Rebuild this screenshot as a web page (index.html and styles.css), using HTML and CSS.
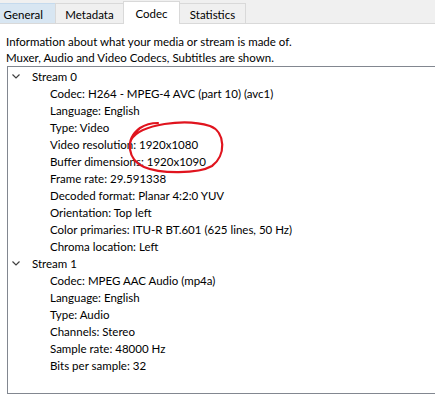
FILE: index.html
```html
<!DOCTYPE html>
<html>
<head>
<meta charset="utf-8">
<link rel="stylesheet" href="styles.css">
</head>
<body>
<div class="window">
  <div class="tabs">
    <div class="tab hover t-general">General</div>
    <div class="tab t-metadata">Metadata</div>
    <div class="tab selected t-codec">Codec</div>
    <div class="tab t-stats">Statistics</div>
  </div>
  <div class="page">
    <p class="info">Information about what your media or stream is made of.<br>Muxer, Audio and Video Codecs, Subtitles are shown.</p>
    <div class="tree">
      <div class="node">
        <div class="row parent"><svg class="chev" width="8" height="5" viewBox="0 0 8 5"><polyline points="0.5,0.5 4,4 7.5,0.5"/></svg><span>Stream 0</span></div>
        <div class="row child">Codec: H264 - MPEG-4 AVC (part 10) (avc1)</div>
        <div class="row child">Language: English</div>
        <div class="row child">Type: Video</div>
        <div class="row child">Video resolution: 1920x1080</div>
        <div class="row child">Buffer dimensions: 1920x1090</div>
        <div class="row child">Frame rate: 29.591338</div>
        <div class="row child">Decoded format: Planar 4:2:0 YUV</div>
        <div class="row child">Orientation: Top left</div>
        <div class="row child">Color primaries: ITU-R BT.601 (625 lines, 50 Hz)</div>
        <div class="row child">Chroma location: Left</div>
      </div>
      <div class="node">
        <div class="row parent"><svg class="chev" width="8" height="5" viewBox="0 0 8 5"><polyline points="0.5,0.5 4,4 7.5,0.5"/></svg><span>Stream 1</span></div>
        <div class="row child">Codec: MPEG AAC Audio (mp4a)</div>
        <div class="row child">Language: English</div>
        <div class="row child">Type: Audio</div>
        <div class="row child">Channels: Stereo</div>
        <div class="row child">Sample rate: 48000 Hz</div>
        <div class="row child">Bits per sample: 32</div>
      </div>
    </div>
  </div>
  <svg class="mark" width="435" height="401" viewBox="0 0 435 401">
    <path d="M131 140 C140 124, 185 118, 210 126 C226 132, 226 156, 212 166 C198 174, 160 174, 144 167 C128 160, 124 140, 140 128 C146 124, 152 123, 158 123"/>
  </svg>
</div>
</body>
</html>
```
FILE: styles.css
```css
html, body {
  margin: 0;
  padding: 0;
}
body {
  width: 435px;
  height: 401px;
  overflow: hidden;
  background: #ffffff;
  font-family: Lato, "Noto Sans", sans-serif;
  font-size: 11.5px;
  color: #000;
}
.window {
  position: relative;
  width: 435px;
  height: 401px;
}
.tabs {
  display: flex;
  align-items: flex-end;
  height: 24px;
  background: #f0f0f0;
  border-bottom: 1px solid #d9d9d9;
  box-sizing: border-box;
}
.tab {
  box-sizing: border-box;
  height: 20px;
  line-height: 21px;
  text-align: center;
  border: 1px solid #d9d9d9;
  border-bottom: none;
  margin-left: -1px;
  background: #f0f0f0;
}
.t-general {
  margin-left: -6px;
  width: 62px;
  text-align: right;
  padding-right: 12px;
}
.t-metadata { width: 69px; }
.t-codec { width: 57px; }
.t-stats { width: 67px; }
.tab.hover {
  background: #d8e6f2;
  border-color: #c5daed;
}
.tab.selected {
  height: 23px;
  line-height: 23px;
  background: #ffffff;
  margin-bottom: -1px;
  position: relative;
}
.page {
  padding: 10px 0 0 0;
}
.info {
  margin: 0 0 0 6px;
  line-height: 16px;
}
.tree {
  margin-left: 7px;
  height: 328px;
  box-sizing: border-box;
  border: 1px solid #828790;
  border-right: none;
  padding-top: 1px;
}
.row {
  height: 17px;
  line-height: 17px;
  white-space: nowrap;
}
.parent {
  display: flex;
  align-items: center;
  padding-left: 4px;
}
.chev {
  fill: none;
  stroke: #404040;
  stroke-width: 1.2;
  margin-right: 12px;
}
.child {
  padding-left: 42px;
}
.mark {
  position: absolute;
  left: 0;
  top: 0;
  pointer-events: none;
}
.mark path {
  fill: none;
  stroke: #e0141e;
  stroke-width: 2.2;
  stroke-linecap: round;
}
```
